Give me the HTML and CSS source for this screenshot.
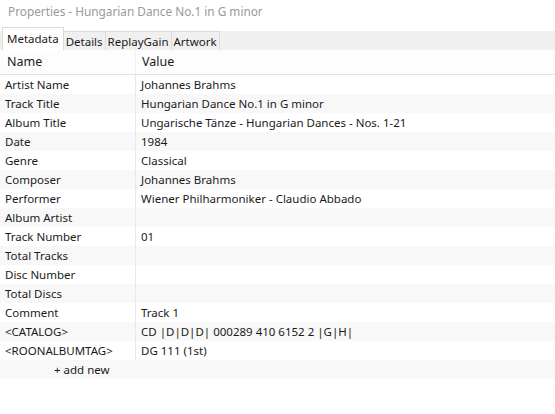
FILE: index.html
```html
<!DOCTYPE html>
<html lang="en">
<head>
    <meta charset="UTF-8">
    <meta name="viewport" content="width=device-width, initial-scale=1.0">
    <title>Properties</title>
    <link rel="stylesheet" href="styles.css">
</head>
<body>
    <div class="window">
        <div class="title-bar">Properties - Hungarian Dance No.1 in G minor</div>

        <div class="tabs">
            <div class="tab active">Metadata</div>
            <div class="tab">Details</div>
            <div class="tab">ReplayGain</div>
            <div class="tab">Artwork</div>
        </div>

        <div class="list">
            <div class="row header">
                <div class="cell name">Name</div>
                <div class="cell value">Value</div>
            </div>
            <div class="rows" id="rows"></div>
            <div class="add-new">+ add new</div>
        </div>
    </div>

    <script>
        const fields = [
            ['Artist Name', 'Johannes Brahms'],
            ['Track Title', 'Hungarian Dance No.1 in G minor'],
            ['Album Title', 'Ungarische Tänze - Hungarian Dances - Nos. 1-21'],
            ['Date', '1984'],
            ['Genre', 'Classical'],
            ['Composer', 'Johannes Brahms'],
            ['Performer', 'Wiener Philharmoniker - Claudio Abbado'],
            ['Album Artist', ''],
            ['Track Number', '01'],
            ['Total Tracks', ''],
            ['Disc Number', ''],
            ['Total Discs', ''],
            ['Comment', 'Track 1'],
            ['<CATALOG>', 'CD |D|D|D| 000289 410 6152 2 |G|H|'],
            ['<ROONALBUMTAG>', 'DG 111 (1st)']
        ];

        const rows = document.getElementById('rows');

        fields.forEach(([name, value]) => {
            const row = document.createElement('div');
            row.className = 'row';

            const nameCell = document.createElement('div');
            nameCell.className = 'cell name';
            nameCell.textContent = name;

            const valueCell = document.createElement('div');
            valueCell.className = 'cell value';
            valueCell.textContent = value;

            row.appendChild(nameCell);
            row.appendChild(valueCell);
            rows.appendChild(row);
        });
    </script>
</body>
</html>
```

FILE: styles.css
```css
* {
    margin: 0;
    padding: 0;
    box-sizing: border-box;
}

body {
    background: #ffffff;
    font-family: "Noto Sans", "Open Sans", sans-serif;
    font-size: 11.5px;
    color: #1a1a1a;
}

.window {
    width: 555px;
    height: 414px;
    display: flex;
    flex-direction: column;
}

.title-bar {
    height: 27px;
    padding: 3px 0 0 8px;
    font-size: 11.8px;
    color: #9a9a9a;
}

/* Tab strip */
.tabs {
    display: flex;
    align-items: flex-end;
    height: 23px;
    padding-left: 2px;
    background: linear-gradient(#ffffff 0, #ffffff 4px, #f0f0f0 4px);
}

.tab {
    height: 19px;
    padding: 0 2px;
    line-height: 19px;
    border: 1px solid #dadada;
    border-bottom: none;
    border-left: none;
    background: #f0f0f0;
}

.tab.active {
    height: 23px;
    padding: 0 4px;
    line-height: 21px;
    border-left: 1px solid #dadada;
    background: #ffffff;
}

/* Property list */
.list {
    display: flex;
    flex-direction: column;
}

.row {
    display: flex;
    height: 19px;
    line-height: 20px;
}

.rows .row:nth-child(even) {
    background: #f8f8f8;
}

.row.header {
    height: 25px;
    line-height: 23px;
    font-size: 12.5px;
    background: #fdfdfd;
    border-bottom: 1px solid #e3e3e3;
}

.cell.name {
    width: 136px;
    padding-left: 5px;
    border-right: 1px solid #e8e8e8;
}

.row.header .cell.name {
    padding-left: 7px;
    border-right: 1px solid #f0f0f0;
}

.cell.value {
    flex: 1;
    padding-left: 5px;
    white-space: nowrap;
}

.row.header .cell.value {
    padding-left: 6px;
}

.add-new {
    height: 19px;
    line-height: 20px;
    padding-left: 54px;
    background: #f8f8f8;
}
```
